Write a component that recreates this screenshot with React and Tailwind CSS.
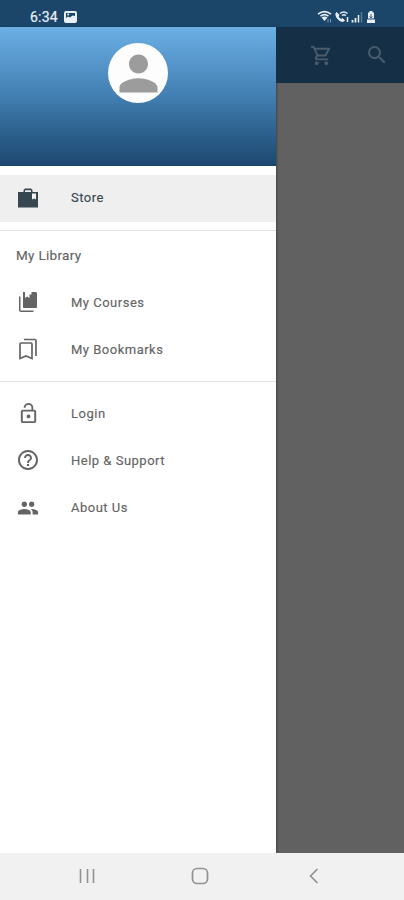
import {
  MdPerson,
  MdOutlineShoppingCart,
  MdSearch,
  MdLockOpen,
  MdHelpOutline,
  MdPeople,
} from 'react-icons/md'

function StoreIcon({ size }) {
  return (
    <svg width={size} height={size} viewBox="0 0 24 24" fill="currentColor">
      <path d="M9 2.500h6L16.500 4v2H22v15.500H2V6h5.500V4L9 2.500zM9 4.300V6h6V4.300H9z" fillRule="evenodd" />
      <path d="M16 7.500h4v6l-2-1-2 1z" fill="#f4f4f4" />
    </svg>
  )
}

function CoursesIcon({ size }) {
  return (
    <svg width={size} height={size} viewBox="0 0 24 24" fill="currentColor">
      <path d="M3 6.500h1.500v14H17.500V22H5c-1.100 0-2-.9-2-2V6.500z" />
      <path d="M7 2h2v6l2.200-1.500L13.500 8V4.500h2V2h4c1 0 1.500.6 1.500 1.500v13c0 1-.5 1.500-1.500 1.500h-11c-1 0-1.500-.5-1.500-1.500V2z" />
    </svg>
  )
}

function BookmarksIcon({ size }) {
  return (
    <svg width={size} height={size} viewBox="0 0 24 24" fill="none" stroke="currentColor" strokeWidth="1.700">
      <path d="M4 7c0-.6.4-1 1-1h10c.6 0 1 .4 1 1v14.500l-6-2.500-6 2.500V7z" />
      <path d="M8 2.500h11c.6 0 1 .4 1 1V19" />
    </svg>
  )
}

const libraryLinks = [
  { icon: CoursesIcon, label: 'My Courses' },
  { icon: BookmarksIcon, label: 'My Bookmarks' },
]

const accountLinks = [
  { icon: MdLockOpen, label: 'Login', size: 23 },
  { icon: MdHelpOutline, label: 'Help & Support' },
  { icon: MdPeople, label: 'About Us', size: 22 },
]

function NavItem({ icon: Icon, label, active, size = 24 }) {
  return (
    <a
      className={`flex items-center h-[47.300px] pl-4 text-[13px] [-webkit-text-stroke:0.150px]
      ${active ? 'bg-[#efefef] text-[#37474f] tracking-[0.500px]' : 'text-[#646464] tracking-[0.500px]'}`}
    >
      <span className="w-6 flex justify-center pb-px">
        <Icon size={size} />
      </span>
      <span className="ml-[31px]">{label}</span>
    </a>
  )
}

function StatusBar() {
  return (
    <div className="h-[27px] shrink-0 bg-[#1b4669] text-[#e8eff5] flex items-center pt-[7px] pl-[30px] pr-[28px]">
      <span className="text-[14px] leading-none tracking-[0.200px] [-webkit-text-stroke:0.200px]">6:34</span>
      <svg className="ml-[6px]" width="13" height="12" viewBox="0 0 13 12">
        <rect width="13" height="12" rx="2" fill="currentColor" />
        <path d="M2 2h9v3L8.500 4.500 6 6.500 4 5.500 2 7z" fill="#1b4669" />
        <circle cx="4.200" cy="3.500" r="1" fill="currentColor" />
      </svg>
      <svg className="ml-auto" width="59" height="14" viewBox="0 0 59 14" fill="none" stroke="currentColor">
        <path d="M1 4.200C5 1 10 1 14 4.200M3.500 6.200C6 4.300 9 4.300 11.500 6.200" strokeWidth="1.600" />
        <path d="M4.500 7.500 7.500 11l3-3.500c-2-1.200-4-1.200-6 0z" fill="currentColor" stroke="none" />
        <path d="M11 12.500V9m2.500 0v3.500" opacity=".5" />
        <path d="M19.500 2.500c-1.500 2 0 5 2 7s4.500 2.500 6 1l-2-2-1.500 1c-1.500-.8-2.300-2-3-3.500l1.200-1z" fill="currentColor" />
        <path d="M23 3.500c2.500-2 5-2 7.500 0M25 5.500c1.500-1 2.500-1 4 0M30.500 7v5" strokeWidth="1.500" />
        <path d="M35.500 12.500V10M38.500 12.500V8" strokeWidth="1.800" />
        <path d="M41.500 12.500V5" strokeWidth="1.500" />
        <path d="M44.500 12.500V2" strokeWidth="1.500" opacity=".3" />
        <path d="M50 9.500h8V13h-8zM51 2.500h1.500V1h3v1.500H57V8.500h-6z" fill="currentColor" stroke="none" />
        <path d="M54 4v4m-1.500-1.500L54 8l1.500-1.500" stroke="#1b4669" strokeWidth=".8" />
      </svg>
    </div>
  )
}

function Drawer() {
  return (
    <aside className="w-[276px] shrink-0 bg-white flex flex-col shadow-[1px_0_2px_rgba(0,0,0,0.3)]">
      <div className="h-[139px] shrink-0 bg-linear-to-b from-[#6cb0e5] via-[#427fb2] to-[#1c4870] border-b border-[#15476b] flex justify-center pt-4">
        <div className="size-[60px] rounded-full bg-[#fdfdfd] text-[#9c9c9c] flex items-center justify-center">
          <MdPerson size={57} />
        </div>
      </div>

      <nav>
        <div className="pt-[8.500px] pb-2 border-b border-[#e2e2e2]">
          <NavItem icon={StoreIcon} label="Store" active />
        </div>
        <div className="pb-[7.500px] border-b border-[#e2e2e2]">
          <p className="h-[48px] flex items-center pl-4 text-[13.500px] tracking-[0.300px] text-[#646464] [-webkit-text-stroke:0.150px]">My Library</p>
          {libraryLinks.map(({ icon, label }) => (
            <NavItem key={label} icon={icon} label={label} />
          ))}
        </div>
        <div className="pt-2">
          {accountLinks.map(({ icon, label, size }) => (
            <NavItem key={label} icon={icon} label={label} size={size} />
          ))}
        </div>
      </nav>
    </aside>
  )
}

export default function App() {
  return (
    <div className="w-[404px] h-[900px] flex flex-col overflow-hidden font-['Roboto',sans-serif]">
      <StatusBar />
      <div className="flex-1 min-h-0 flex bg-[#616161]">
        <Drawer />
        <div className="flex-1">
          <div className="h-[56px] bg-[#152f47] text-[#4a5c6a] flex items-center justify-between pl-[34px] pr-[15px]">
            <MdOutlineShoppingCart size={23} />
            <MdSearch size={24} />
          </div>
        </div>
      </div>
      <div className="h-[47px] shrink-0 bg-[#f1f1f1] text-[#929292] flex items-center justify-between pl-[79px] pr-[85px] pb-[2px]">
        <svg width="16" height="16" viewBox="0 0 16 16" stroke="currentColor" strokeWidth="1.600">
          <path d="M1.500 1v14M8.500 1v14M14.500 1v14" />
        </svg>
        <svg className="-ml-[5px]" width="18" height="18" viewBox="0 0 18 18" fill="none" stroke="currentColor" strokeWidth="1.700">
          <rect x="1.500" y="1.500" width="15" height="15" rx="4.500" />
        </svg>
        <svg width="10" height="16" viewBox="0 0 10 16" fill="none" stroke="currentColor" strokeWidth="1.700">
          <path d="M8.500 1 1.500 8l7 7" />
        </svg>
      </div>
    </div>
  )
}
